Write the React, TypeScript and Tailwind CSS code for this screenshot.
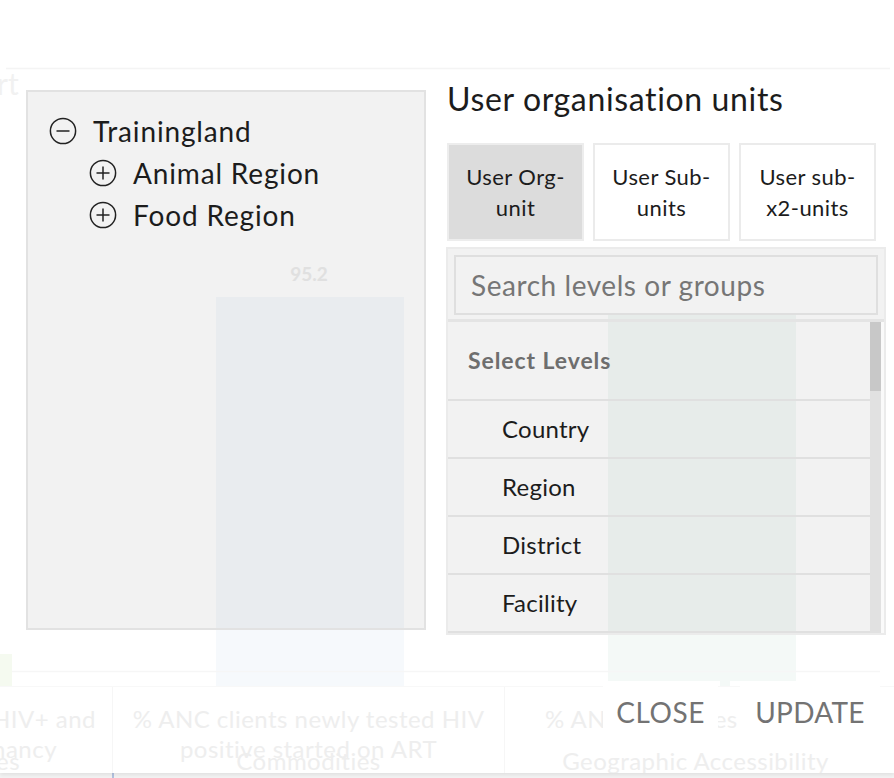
import React from "react";

// Org-unit picker dialog, drawn over a faded dashboard.

const levels = ["Country", "Region", "District", "Facility"];

const tabs = [
  { lines: ["User Org-", "unit"], active: true },
  { lines: ["User Sub-", "units"], active: false },
  { lines: ["User sub-", "x2-units"], active: false },
];

function TreeToggle({ open }: { open: boolean }) {
  return (
    <svg width="28" height="28" viewBox="0 0 28 28" fill="none" className="shrink-0">
      <circle cx="14" cy="14" r="12.6" stroke="#222" strokeWidth="1.5" />
      <path d="M7.5 14h13" stroke="#222" strokeWidth="1.5" />
      {!open && <path d="M14 7.5v13" stroke="#222" strokeWidth="1.5" />}
    </svg>
  );
}

function TreeRow({ label, open, indent }: { label: string; open: boolean; indent?: boolean }) {
  return (
    <div className={`flex h-[42px] items-center gap-[16px] ${indent ? "pl-[40px]" : ""}`}>
      <TreeToggle open={open} />
      <span className="text-[28px] tracking-[0.03em] text-[#1c1c1c] leading-none">{label}</span>
    </div>
  );
}

// The dashboard behind the modal, already washed out.
function Dashboard() {
  return (
    <div className="absolute inset-0 flex flex-col bg-[#f3f3f3]">
      <div className="relative flex h-[773px] flex-col bg-white shadow-[0_2px_4px_rgba(0,0,0,0.08)]">
        <svg className="absolute inset-0" width="894" height="773" viewBox="0 0 894 773">
          <path d="M6 68.5H890" stroke="#f4f4f4" strokeWidth="1.5" />
          <rect x="216" y="297" width="188" height="389" fill="#f6f9fc" />
          <rect x="608" y="313" width="188" height="368" fill="#f4f9f7" />
          <rect x="720" y="680" width="10" height="6" fill="#f4f9f7" />
          <rect x="0" y="654" width="12" height="32" fill="#f5faf0" />
          <path d="M12 671.5H880" stroke="#f6f6f6" strokeWidth="1.5" />
          <text
            x="309"
            y="281"
            textAnchor="middle"
            fontFamily="Lato, sans-serif"
            fontWeight="700"
            fontSize="19"
            fill="#ededed"
          >
            95.2
          </text>
        </svg>

        <div className="relative mt-[68px] -ml-[3px] text-[30px] leading-[30px] text-[#f1f1f1]">rt</div>

        <div className="relative mt-auto flex h-[87px] border-t border-[#f8f8f8] text-[24px] leading-[30px] tracking-[0.02em] text-[#eeeeee]">
          <div className="relative w-[113px] overflow-hidden border-r border-[#f6f6f6] pt-[17px]">
            <div className="flex justify-end pr-[16px]">
              <span className="whitespace-nowrap">HIV+ and</span>
            </div>
            <div className="flex justify-end pr-[55px]">
              <span className="whitespace-nowrap">pregnancy</span>
            </div>
            <div className="-mt-[18px] whitespace-nowrap -ml-[4px]">es</div>
          </div>
          <div className="relative w-[392px] overflow-hidden border-r border-[#f6f6f6] pt-[17px] text-center">
            <div className="whitespace-nowrap">% ANC clients newly tested HIV</div>
            <div className="whitespace-nowrap">positive started on ART</div>
            <div className="-mt-[18px] whitespace-nowrap">Commodities</div>
          </div>
          <div className="relative flex-1 overflow-hidden pt-[17px] text-center">
            <div className="whitespace-nowrap text-left pl-[40px]">% ANC attendees</div>
            <div className="whitespace-nowrap">&nbsp;</div>
            <div className="-mt-[18px] whitespace-nowrap -ml-[8px]">Geographic Accessibility</div>
          </div>
        </div>
      </div>
      <div className="flex h-[5px]">
        <div className="ml-[112px] w-[2px] bg-[#b3c3e0]" />
      </div>
    </div>
  );
}

export default function App() {
  return (
    <div className="relative h-[778px] w-[894px] overflow-hidden font-['Lato',sans-serif]">
      <Dashboard />

      <div className="absolute inset-x-0 top-0 flex h-[773px] flex-col">
        <div className="flex gap-[20px] pl-[26px] pt-[78px]">
          {/* org unit tree */}
          <div className="mt-[12px] h-[540px] w-[400px] border-2 border-[#e2e2e2] bg-black/5 pl-[21px] pt-[18px]">
            <TreeRow label="Trainingland" open />
            <TreeRow label="Animal Region" open={false} indent />
            <TreeRow label="Food Region" open={false} indent />
          </div>

          <div className="flex w-[440px] flex-col">
            <h2 className="h-[42px] pl-[1px] text-[32px] font-normal leading-[42px] tracking-[0.02em] text-[#1c1c1c]">
              User organisation units
            </h2>

            <div className="mt-[23px] flex gap-[9px] pl-[1px]">
              {tabs.map((t) => (
                <div
                  key={t.lines[0]}
                  className={`flex h-[98px] w-[137px] flex-col items-center justify-center border-2 text-[22px] leading-[31px] tracking-[0.02em] text-[#1c1c1c] ${
                    t.active ? "border-[#ededed] bg-[#dcdcdc]" : "border-[#ebebeb] bg-white"
                  }`}
                >
                  {t.lines.map((l) => (
                    <span key={l}>{l}</span>
                  ))}
                </div>
              ))}
            </div>

            <div className="mt-[6px] flex h-[388px] flex-col border-2 border-[#ebebeb] bg-black/5">
              <div className="border-b-[3px] border-[#e4e4e4] p-[6px] pb-[4px]">
                <div className="flex h-[60px] items-center border-2 border-[#dfdfdf] pl-[15px] text-[28px] tracking-[0.02em] text-[#767676]">
                  Search levels or groups
                </div>
              </div>
              <div className="flex min-h-0 flex-1">
                <div className="flex flex-1 flex-col">
                  <div className="flex h-[77px] items-center pl-[20px] text-[23px] font-bold tracking-[0.04em] text-[#6e6e6e]">
                    Select Levels
                  </div>
                  {levels.map((lv) => (
                    <div
                      key={lv}
                      className="flex h-[58px] items-center border-t-2 border-[#e0e0e0] pl-[54px] text-[24px] tracking-[0.01em] text-[#1c1c1c]"
                    >
                      {lv}
                    </div>
                  ))}
                  <div className="border-t-2 border-[#e0e0e0]" />
                </div>
                <div className="flex w-[11px] flex-col bg-[#e1e1e1]">
                  <div className="h-[69px] bg-[#c8c8c8]" />
                </div>
                <div className="w-[3px] bg-white/60" />
              </div>
            </div>
          </div>
        </div>

        <div className="mt-auto mb-[35px] flex justify-end gap-[22px] pr-[14px]">
          <button className="h-[52px] w-[115px] bg-white text-[28px] uppercase tracking-[0.02em] text-[#737373]">
            Close
          </button>
          <button className="h-[52px] w-[140px] bg-white text-[28px] uppercase tracking-[0.01em] text-[#737373]">
            Update
          </button>
        </div>
      </div>
    </div>
  );
}
